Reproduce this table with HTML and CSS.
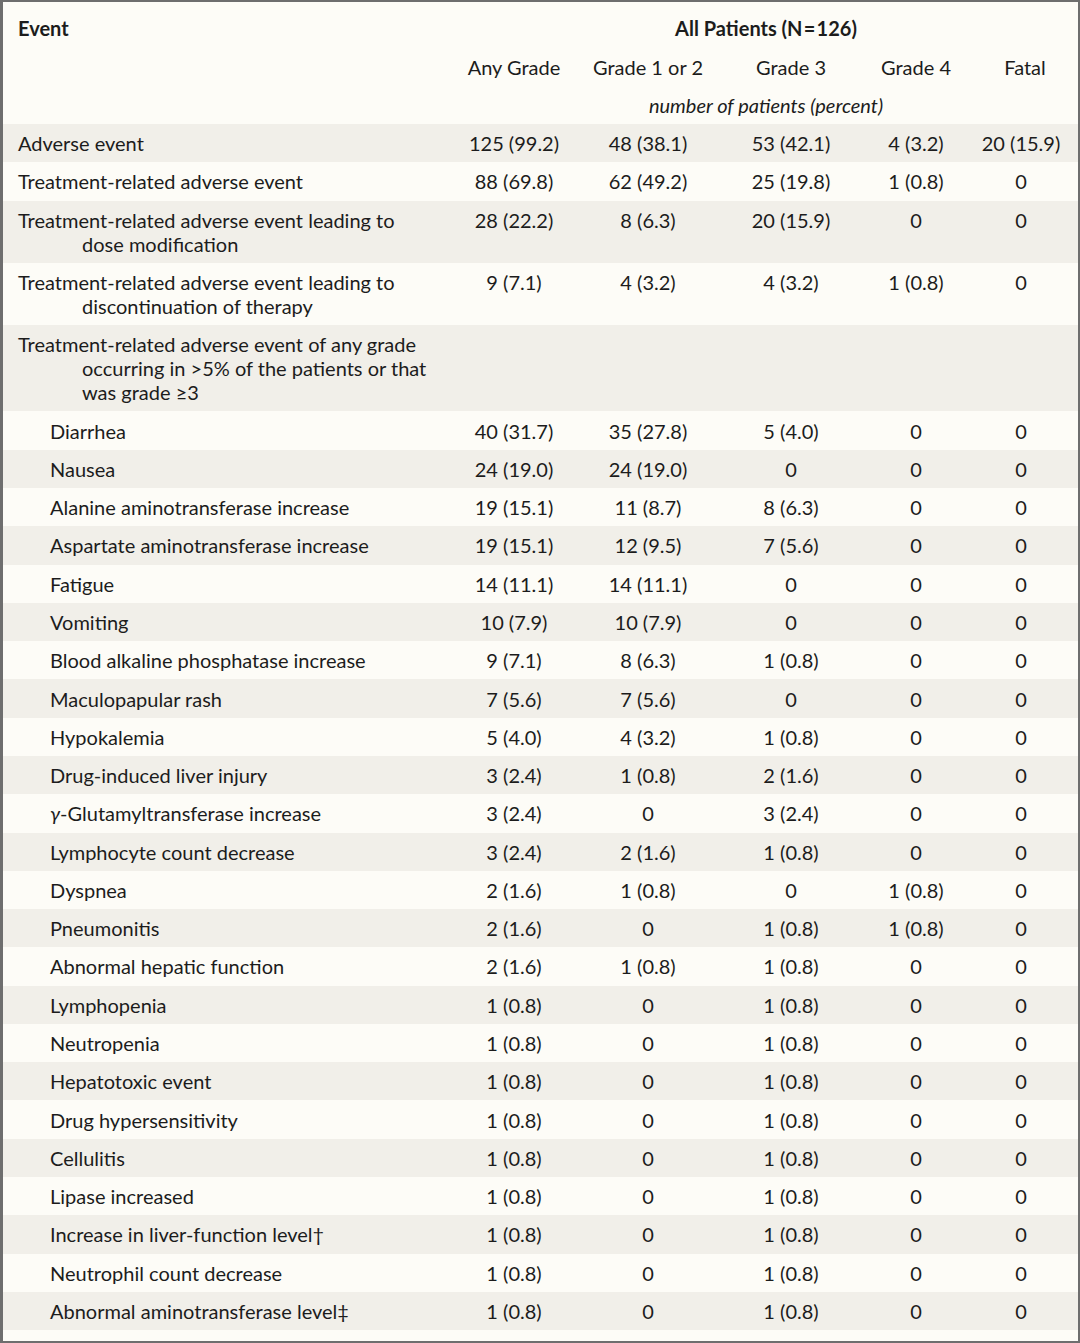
FILE: index.html
```html
<!DOCTYPE html>
<html lang="en">
<head>
  <meta charset="UTF-8" />
  <title>Adverse Events</title>
  <link rel="stylesheet" href="styles.css">
</head>
<body>
  <div class="frame">
    <table class="ae-table">
      <colgroup>
        <col class="c-event">
        <col class="c-any">
        <col class="c-g12">
        <col class="c-g3">
        <col class="c-g4">
        <col class="c-fatal">
      </colgroup>
      <thead>
        <tr>
          <th class="event-head">Event</th>
          <th colspan="5" class="group-head">All Patients (N&#8202;=&#8202;126)</th>
        </tr>
        <tr>
          <th></th>
          <th>Any Grade</th>
          <th>Grade 1 or 2</th>
          <th>Grade 3</th>
          <th>Grade 4</th>
          <th>Fatal</th>
        </tr>
        <tr class="unit-row">
          <th></th>
          <th colspan="5" class="unit">number of patients (percent)</th>
        </tr>
      </thead>
      <tbody>
        <tr class="shade"><td class="name">Adverse event</td><td>125 (99.2)</td><td>48 (38.1)</td><td>53 (42.1)</td><td>4 (3.2)</td><td>20 (15.9)</td></tr>
        <tr><td class="name">Treatment-related adverse event</td><td>88 (69.8)</td><td>62 (49.2)</td><td>25 (19.8)</td><td>1 (0.8)</td><td>0</td></tr>
        <tr class="shade"><td class="name hang">Treatment-related adverse event leading to<br>dose modification</td><td>28 (22.2)</td><td>8 (6.3)</td><td>20 (15.9)</td><td>0</td><td>0</td></tr>
        <tr><td class="name hang">Treatment-related adverse event leading to<br>discontinuation of therapy</td><td>9 (7.1)</td><td>4 (3.2)</td><td>4 (3.2)</td><td>1 (0.8)</td><td>0</td></tr>
        <tr class="shade"><td class="name hang">Treatment-related adverse event of any grade<br>occurring in &gt;5% of the patients or that<br>was grade &ge;3</td><td></td><td></td><td></td><td></td><td></td></tr>
        <tr><td class="name sub">Diarrhea</td><td>40 (31.7)</td><td>35 (27.8)</td><td>5 (4.0)</td><td>0</td><td>0</td></tr>
        <tr class="shade"><td class="name sub">Nausea</td><td>24 (19.0)</td><td>24 (19.0)</td><td>0</td><td>0</td><td>0</td></tr>
        <tr><td class="name sub">Alanine aminotransferase increase</td><td>19 (15.1)</td><td>11 (8.7)</td><td>8 (6.3)</td><td>0</td><td>0</td></tr>
        <tr class="shade"><td class="name sub">Aspartate aminotransferase increase</td><td>19 (15.1)</td><td>12 (9.5)</td><td>7 (5.6)</td><td>0</td><td>0</td></tr>
        <tr><td class="name sub">Fatigue</td><td>14 (11.1)</td><td>14 (11.1)</td><td>0</td><td>0</td><td>0</td></tr>
        <tr class="shade"><td class="name sub">Vomiting</td><td>10 (7.9)</td><td>10 (7.9)</td><td>0</td><td>0</td><td>0</td></tr>
        <tr><td class="name sub">Blood alkaline phosphatase increase</td><td>9 (7.1)</td><td>8 (6.3)</td><td>1 (0.8)</td><td>0</td><td>0</td></tr>
        <tr class="shade"><td class="name sub">Maculopapular rash</td><td>7 (5.6)</td><td>7 (5.6)</td><td>0</td><td>0</td><td>0</td></tr>
        <tr><td class="name sub">Hypokalemia</td><td>5 (4.0)</td><td>4 (3.2)</td><td>1 (0.8)</td><td>0</td><td>0</td></tr>
        <tr class="shade"><td class="name sub">Drug-induced liver injury</td><td>3 (2.4)</td><td>1 (0.8)</td><td>2 (1.6)</td><td>0</td><td>0</td></tr>
        <tr><td class="name sub"><i>&gamma;</i>-Glutamyltransferase increase</td><td>3 (2.4)</td><td>0</td><td>3 (2.4)</td><td>0</td><td>0</td></tr>
        <tr class="shade"><td class="name sub">Lymphocyte count decrease</td><td>3 (2.4)</td><td>2 (1.6)</td><td>1 (0.8)</td><td>0</td><td>0</td></tr>
        <tr><td class="name sub">Dyspnea</td><td>2 (1.6)</td><td>1 (0.8)</td><td>0</td><td>1 (0.8)</td><td>0</td></tr>
        <tr class="shade"><td class="name sub">Pneumonitis</td><td>2 (1.6)</td><td>0</td><td>1 (0.8)</td><td>1 (0.8)</td><td>0</td></tr>
        <tr><td class="name sub">Abnormal hepatic function</td><td>2 (1.6)</td><td>1 (0.8)</td><td>1 (0.8)</td><td>0</td><td>0</td></tr>
        <tr class="shade"><td class="name sub">Lymphopenia</td><td>1 (0.8)</td><td>0</td><td>1 (0.8)</td><td>0</td><td>0</td></tr>
        <tr><td class="name sub">Neutropenia</td><td>1 (0.8)</td><td>0</td><td>1 (0.8)</td><td>0</td><td>0</td></tr>
        <tr class="shade"><td class="name sub">Hepatotoxic event</td><td>1 (0.8)</td><td>0</td><td>1 (0.8)</td><td>0</td><td>0</td></tr>
        <tr><td class="name sub">Drug hypersensitivity</td><td>1 (0.8)</td><td>0</td><td>1 (0.8)</td><td>0</td><td>0</td></tr>
        <tr class="shade"><td class="name sub">Cellulitis</td><td>1 (0.8)</td><td>0</td><td>1 (0.8)</td><td>0</td><td>0</td></tr>
        <tr><td class="name sub">Lipase increased</td><td>1 (0.8)</td><td>0</td><td>1 (0.8)</td><td>0</td><td>0</td></tr>
        <tr class="shade"><td class="name sub">Increase in liver-function level&dagger;</td><td>1 (0.8)</td><td>0</td><td>1 (0.8)</td><td>0</td><td>0</td></tr>
        <tr><td class="name sub">Neutrophil count decrease</td><td>1 (0.8)</td><td>0</td><td>1 (0.8)</td><td>0</td><td>0</td></tr>
        <tr class="shade"><td class="name sub">Abnormal aminotransferase level&Dagger;</td><td>1 (0.8)</td><td>0</td><td>1 (0.8)</td><td>0</td><td>0</td></tr>
      </tbody>
    </table>
  </div>
</body>
</html>
```

FILE: styles.css
```css
html, body {
  margin: 0;
  padding: 0;
  background: #fdfcf7;
}
body {
  font-family: Lato, "Open Sans", sans-serif;
  color: #1c1c1c;
}
.frame {
  width: 1080px;
  height: 1343px;
  box-sizing: border-box;
  border: 2px solid #6e6e6e;
  border-left-width: 3px;
  background: #fdfcf7;
  padding-top: 6px;
}
.ae-table {
  border-collapse: collapse;
  width: 1075px;
  table-layout: fixed;
  font-size: 20px;
}
.c-event { width: 451px; }
.c-any { width: 120px; }
.c-g12 { width: 148px; }
.c-g3 { width: 138px; }
.c-g4 { width: 112px; }
.c-fatal { width: 106px; }

th {
  font-weight: normal;
  text-align: center;
  height: 39px;
  padding: 0;
  vertical-align: middle;
  line-height: 24px;
}
.unit-row th { height: 38px; }
th.event-head {
  text-align: left;
  padding-left: 15px;
  font-weight: bold;
}
th.group-head { font-weight: bold; }
th.unit { font-style: italic; }

td {
  padding: 7.15px 0;
  line-height: 24px;
  text-align: center;
  vertical-align: top;
  white-space: nowrap;
}
td:last-child { padding-right: 8px; }
tr.shade td { background: #f1efe9; }
td.name {
  text-align: left;
  padding-left: 15px;
}
td.hang {
  padding-left: 79px;
  text-indent: -64px;
}
td.sub { padding-left: 47px; }
```
